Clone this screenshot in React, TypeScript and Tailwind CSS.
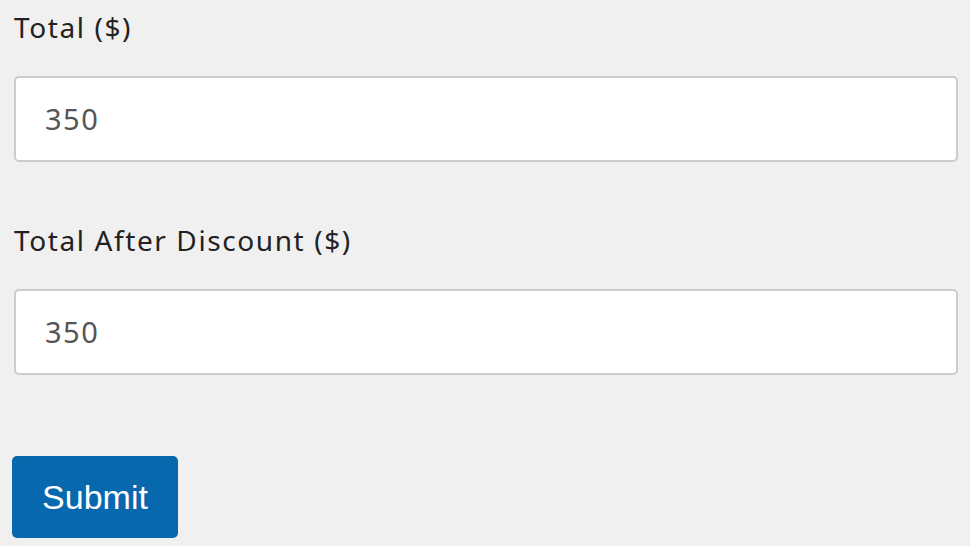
import React from 'react';

const Field: React.FC<{ label: string; value: string }> = ({ label, value }) => (
  <div>
    <label className="block pl-[14px] text-[28px] leading-[38px] text-[#222] tracking-[1.6px]">
      {label}
    </label>
    <div className="mt-[30px] ml-[14px] mr-[12px] h-[86px] flex items-center rounded-[5px] border-2 border-[#cccccc] bg-white pl-[29px]">
      <span className="text-[29px] text-[#555] tracking-[1.5px]">{value}</span>
    </div>
  </div>
);

export default function App() {
  return (
    <div
      className="min-h-screen w-[970px] h-[546px] overflow-hidden bg-[#f0f0f0] pt-[8px]"
      style={{ fontFamily: '"Noto Sans", sans-serif' }}
    >
      <Field label="Total ($)" value="350" />
      <div className="h-[59px]" />
      <Field label="Total After Discount ($)" value="350" />

      <div className="pl-[12px] mt-[81px]">
        <button className="h-[82px] w-[166px] rounded-[5px] bg-[#0768ad] text-white text-[34px] font-['Liberation_Sans',Arial,sans-serif]">
          Submit
        </button>
      </div>
    </div>
  );
}
